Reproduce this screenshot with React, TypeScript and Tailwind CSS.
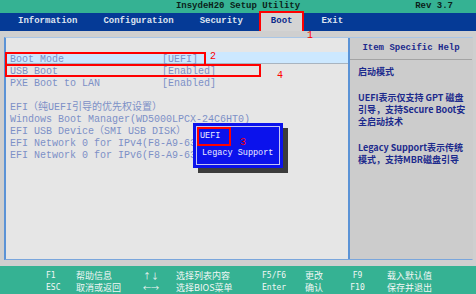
const mono = "font-['Liberation_Mono','Noto_Sans_CJK_SC',monospace]";
const sans = "font-['Noto_Sans_CJK_SC','Noto_Sans',sans-serif]";

const menus = ['Information', 'Configuration', 'Security', 'Boot', 'Exit'];

const settings = [
  { label: 'Boot Mode', value: '[UEFI]', selected: true },
  { label: 'USB Boot', value: '[Enabled]' },
  { label: 'PXE Boot to LAN', value: '[Enabled]' },
];

const bootOrder = [
  'EFI（纯UEFI引导的优先权设置）',
  'Windows Boot Manager(WD5000LPCX-24C6HT0)',
  'EFI USB Device（SMI USB DISK）',
  'EFI Network 0 for IPv4(F8-A9-63-1B-5C-2D)',
  'EFI Network 0 for IPv6(F8-A9-63-1B-5C-2D)',
];

const footer = [
  ['F1', '帮助信息', '↑↓', '选择列表内容', 'F5/F6', '更改', 'F9', '载入默认值'],
  ['ESC', '取消或返回', '←→', '选择BIOS菜单', 'Enter', '确认', 'F10', '保存并退出'],
];

export default function App() {
  return (
    <div className={`relative w-[476px] h-[294px] overflow-hidden flex flex-col ${mono}`}>
      {/* Title bar */}
      <div className="h-[13px] bg-[#35b293] grid grid-cols-[1fr_auto_1fr] items-center text-[9px] leading-none font-bold text-[#0b1f1a]">
        <span />
        <span>InsydeH20 Setup Utility</span>
        <span className="justify-self-end pr-[23px]">Rev 3.7</span>
      </div>

      {/* Menu bar */}
      <div className="h-[18px] bg-[#053a96] flex items-center pl-[8px] gap-[6px] text-[9px] font-bold">
        {menus.map((m) =>
          m === 'Boot' ? (
            <span
              key={m}
              className="ml-[2px] mr-[3px] h-[18px] px-[10px] flex items-center bg-[#d4d4d4] text-[#0c2a8a] outline-2 outline-[#ff0000]"
            >
              {m}
            </span>
          ) : (
            <span key={m} className="px-[10px] text-[#dde4f0]">
              {m}
            </span>
          )
        )}
      </div>

      {/* Body */}
      <div className="flex-1 bg-[#cfcfcf] pt-[6px] pl-[4px] pr-[3px] pb-[6px] flex">
        <div className="flex-1 flex border-l-2 border-b border-t border-r border-l-[#5b93d6] border-b-[#7aa6dc] border-t-[#a9c6e6] border-r-[#cccccc]">
          {/* Left panel */}
          <div className="flex-1 bg-[#e6e6e6] pt-[14px] text-[10px] text-[#7d90c6]">
            {settings.map((s) => (
              <div
                key={s.label}
                className={`h-[12px] flex items-start leading-[15px] whitespace-nowrap ${s.selected ? 'bg-[#cce8ff] border-b border-[#a8b4c0]' : ''}`}
              >
                <span className="w-[156px] pl-[4px]">{s.label}</span>
                <span>{s.value}</span>
              </div>
            ))}
            <div className="h-[12px]" />
            {bootOrder.map((b) => (
              <div key={b} className="h-[12px] leading-[15px] pl-[4px] whitespace-nowrap">
                {b}
              </div>
            ))}
          </div>

          {/* Right panel */}
          <div className="w-[124px] bg-[#cccccc] border-l-2 border-[#5b93d6] flex flex-col">
            <div className="h-[22px] border-b border-[#a4a4a4] flex items-center justify-center text-[9px] font-bold text-[#1c2a8c]">
              Item Specific Help
            </div>
            <div className={`pl-[8px] pt-[6px] text-[9px] leading-[12px] font-bold text-[#1c2a8c] whitespace-nowrap ${sans}`}>
              <p>启动模式</p>
              <p className="mt-[14px]">
                UEFI表示仅支持 GPT 磁盘
                <br />
                引导，支持Secure Boot安
                <br />
                全启动技术
              </p>
              <p className="mt-[14px]">
                Legacy Support表示传统
                <br />
                模式，支持MBR磁盘引导
              </p>
            </div>
          </div>
        </div>
      </div>

      {/* Footer */}
      <div className={`h-[28px] bg-[#35b293] pl-[46px] pt-[4px] text-[#f2f7f5] ${sans}`}>
        {footer.map((row, i) => (
          <div key={i} className="grid grid-cols-[30px_50px_50px_86px_43px_25px_55px_1fr] h-[12px] items-center text-[9px] leading-[12px] whitespace-nowrap">
            <span className="font-['DejaVu_Sans_Mono',monospace] text-[8px]">{row[0]}</span>
            <span>{row[1]}</span>
            <span className="text-center text-[8px]">{row[2]}</span>
            <span>{row[3]}</span>
            <span className="font-['DejaVu_Sans_Mono',monospace] text-[8px]">{row[4]}</span>
            <span>{row[5]}</span>
            <span className="text-center font-['DejaVu_Sans_Mono',monospace] text-[8px]">{row[6]}</span>
            <span className="pl-[2px]">{row[7]}</span>
          </div>
        ))}
      </div>

      {/* Annotation boxes */}
      <div className="absolute left-[5px] top-[52px] w-[201px] h-[14px] border-2 border-[#ff0000]" />
      <div className="absolute left-[5px] top-[64px] w-[256px] h-[13px] border-2 border-[#ff0000]" />
      <span className="absolute left-[307px] top-[30px] text-[10px] leading-[12px] text-[#ff0000]">1</span>
      <span className="absolute left-[210px] top-[51px] text-[10px] leading-[12px] text-[#ff0000]">2</span>
      <span className="absolute left-[277px] top-[70px] text-[10px] leading-[12px] text-[#ff0000]">4</span>

      {/* Popup */}
      <div className="absolute left-[193px] top-[123px] w-[90px] h-[45px] bg-[#0b12ec] shadow-[5px_5px_0_#3c3c3c] p-[3px]">
        <div className="h-full border border-[#c4c4f4] text-[8.5px] text-[#eeeeff]">
          <div className="h-[19px] flex items-center">
            <span className="h-[19px] flex items-center pl-[1px] pr-[9px] border-2 border-[#ff0000]">UEFI</span>
          </div>
          <div className="h-[14px] leading-[14px] pl-[5px] whitespace-nowrap">Legacy Support</div>
        </div>
      </div>
      <span className="absolute left-[240px] top-[137px] text-[10px] leading-[12px] text-[#ff0000]">3</span>
    </div>
  );
}
